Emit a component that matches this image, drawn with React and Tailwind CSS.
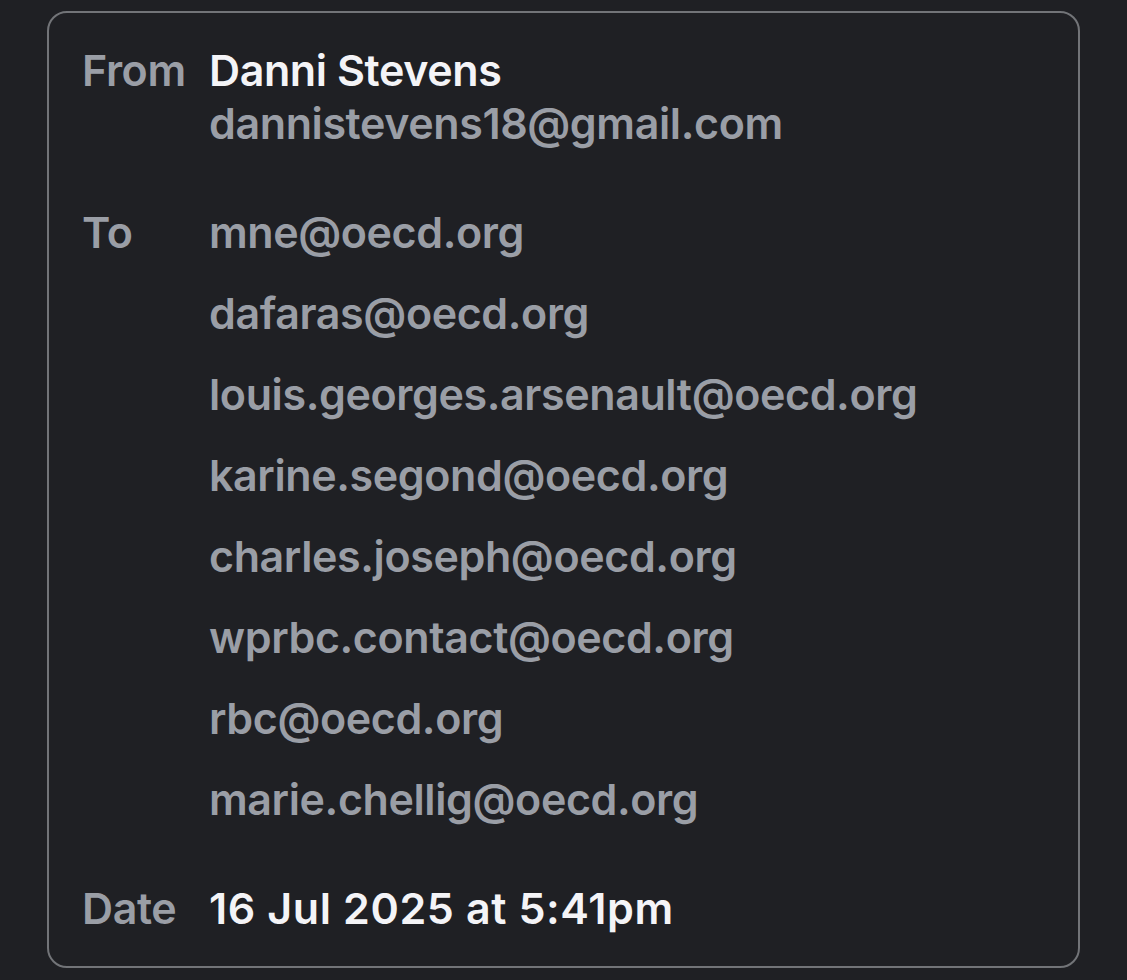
export default function App() {
  const to = [
    "mne@oecd.org",
    "dafaras@oecd.org",
    "louis.georges.arsenault@oecd.org",
    "karine.segond@oecd.org",
    "charles.joseph@oecd.org",
    "wprbc.contact@oecd.org",
    "rbc@oecd.org",
    "marie.chellig@oecd.org",
  ];
  return (
    <div
      className="w-[1127px] h-[980px] bg-[#1f2024] pt-[11px] pl-[47px] overflow-hidden"
      style={{ fontFamily: "Inter, 'Noto Sans', sans-serif" }}
    >
      <div className="w-[1033px] h-[957px] border-2 border-[#727478] rounded-[20px] pl-[33px] pt-[31px] text-[43px] font-semibold tracking-[-0.4px]">
        <div className="grid grid-cols-[127px_1fr] leading-[53px]">
          <div className="text-[#9a9ea6]">From</div>
          <div>
            <div className="text-[#f4f4f7]">Danni Stevens</div>
            <div className="text-[#9a9ea6]">dannistevens18@gmail.com</div>
          </div>
        </div>
        <div className="grid grid-cols-[127px_1fr] leading-[81px] mt-[42px]">
          <div className="text-[#9a9ea6]">To</div>
          <div className="text-[#9a9ea6]">
            {to.map((t) => (
              <div key={t}>{t}</div>
            ))}
          </div>
        </div>
        <div className="grid grid-cols-[127px_1fr] leading-[53px] mt-[42px]">
          <div className="text-[#9a9ea6]">Date</div>
          <div className="text-[#f4f4f7] tracking-[0.6px]">16 Jul 2025 at 5:41pm</div>
        </div>
      </div>
    </div>
  );
}
